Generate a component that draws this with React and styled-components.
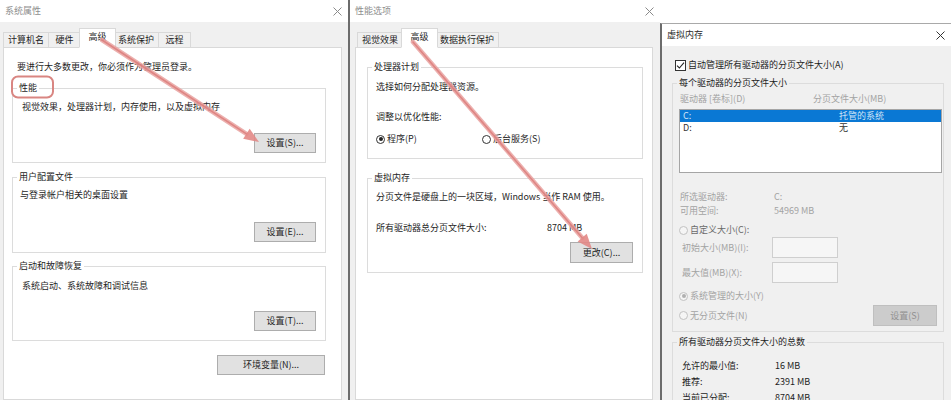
import React from "react";
import styled, { createGlobalStyle } from "styled-components";

const GlobalStyle = createGlobalStyle`
  * { box-sizing: border-box; }
  html, body { margin: 0; padding: 0; background: #fff; }
  body {
    font-family: "Noto Sans CJK SC", "Noto Sans", sans-serif;
    font-size: 9px;
    line-height: 12px;
    color: #1e1e1e;
  }
`;

const Screen = styled.div`
  position: relative;
  width: 951px;
  height: 400px;
  overflow: hidden;
  display: flex;
  align-items: flex-start;
  background: #fff;
`;

const Window = styled.section`
  flex: ${(p) => (p.$w ? "none" : "1")};
  width: ${(p) => (p.$w ? `${p.$w}px` : "auto")};
  height: ${(p) => 400 - (p.$top || 0)}px;
  margin-top: ${(p) => p.$top || 0}px;
  display: flex;
  flex-direction: column;
  background: #f0f0f0;
  border-left: ${(p) => (p.$edge ? "2px solid #6c6c6c" : "none")};
  border-top: ${(p) => (p.$top ? "1px solid #a9a9a9" : "none")};
`;

const TitleBar = styled.header`
  flex: none;
  height: 22px;
  display: flex;
  align-items: center;
  justify-content: space-between;
  padding: 0 6px 0 5px;
  background: #fff;
  color: ${(p) => (p.$active ? "#2a2a2a" : "#8e8e8e")};
`;

const CloseIcon = ({ active }) => (
  <svg width="9" height="9" viewBox="0 0 9 9">
    <path
      d="M0.5 0.5 L8.5 8.5 M8.5 0.5 L0.5 8.5"
      stroke={active ? "#333" : "#8a8a8a"}
      strokeWidth="1"
      fill="none"
    />
  </svg>
);

const Body = styled.div`
  flex: 1;
  display: flex;
  flex-direction: column;
  min-height: 0;
  padding: ${(p) => p.$pad};
`;

const TabStrip = styled.div`
  flex: none;
  height: 19px;
  display: flex;
  align-items: flex-end;
  padding-left: ${(p) => p.$indent || 0}px;
  position: relative;
  z-index: 1;
`;

const Tab = styled.div`
  height: ${(p) => (p.$selected ? 20 : 15)}px;
  min-width: ${(p) => (p.$selected ? 37 : 33)}px;
  padding: 0 4px;
  margin: 0 ${(p) => (p.$selected ? -2 : 0)}px
    ${(p) => (p.$selected ? -1 : 0)}px ${(p) => (p.$selected ? -2 : -1)}px;
  display: flex;
  align-items: center;
  justify-content: center;
  border: 1px solid #d9d9d9;
  border-bottom: ${(p) => (p.$selected ? "1px solid #fff" : "none")};
  background: ${(p) => (p.$selected ? "#fff" : "#f0f0f0")};
  position: relative;
  z-index: ${(p) => (p.$selected ? 2 : 0)};
  padding-bottom: ${(p) => (p.$selected ? 3 : 0)}px;
  &:first-child {
    margin-left: 0;
  }
`;

const TabPage = styled.div`
  flex: 1;
  display: flex;
  flex-direction: column;
  background: #fff;
  border: 1px solid #d9d9d9;
  padding: ${(p) => p.$pad};
`;

const Note = styled.p`
  margin: 0 0 0 ${(p) => p.$indent || 0}px;
`;

const Group = styled.fieldset`
  margin: ${(p) => p.$mt || 0}px 0 0 0;
  padding: 0;
  min-inline-size: 0;
  border: 1px solid #dcdcdc;
  flex: none;
`;

const Legend = styled.legend`
  margin-left: 4px;
  padding: 0 2px;
  font-size: 9px;
  line-height: 12px;
  color: ${(p) => p.$color || "#1e1e1e"};
`;

const GroupBody = styled.div`
  display: flex;
  flex-direction: column;
  padding: ${(p) => p.$pad};
`;

const Text = styled.div`
  margin-top: ${(p) => p.$mt || 0}px;
  padding-left: ${(p) => p.$indent || 0}px;
  color: ${(p) => p.$color || "#1e1e1e"};
  line-height: ${(p) => p.$lh || 12}px;
`;

const ButtonRow = styled.div`
  display: flex;
  justify-content: flex-end;
  margin-top: ${(p) => p.$mt || 0}px;
  padding-right: ${(p) => p.$pr || 0}px;
`;

const Button = styled.button`
  width: ${(p) => p.$w}px;
  height: ${(p) => p.$h || 20}px;
  padding: 0;
  font: inherit;
  line-height: 12px;
  color: ${(p) => (p.disabled ? "#909090" : "#1e1e1e")};
  background: ${(p) => (p.disabled ? "#cccccc" : "#e1e1e1")};
  border: 1px solid ${(p) => (p.disabled ? "#bfbfbf" : "#adadad")};
  border-radius: 0;
`;

const InfoRow = styled.div`
  display: flex;
  margin-top: ${(p) => p.$mt || 0}px;
  padding-left: ${(p) => p.$indent || 0}px;
  line-height: ${(p) => p.$lh || 12}px;
  color: ${(p) => p.$color || "#1e1e1e"};
`;

const InfoLabel = styled.span`
  width: ${(p) => p.$w}px;
  flex: none;
`;

const RadioRow = styled.div`
  display: flex;
  margin-top: ${(p) => p.$mt || 0}px;
`;

const RadioItem = styled.label`
  display: inline-flex;
  align-items: center;
  gap: 2px;
  width: ${(p) => (p.$w ? `${p.$w}px` : "auto")};
  margin-top: ${(p) => p.$mt || 0}px;
  color: ${(p) => p.$color || "#1e1e1e"};
  line-height: 12px;
`;

const RadioDot = styled.span`
  position: relative;
  flex: none;
  width: 9px;
  height: 9px;
  border-radius: 50%;
  border: 1px solid ${(p) => (p.$disabled ? "#c2c2c2" : "#333")};
  background: ${(p) => (p.$disabled ? "#f5f5f5" : "#fff")};
  &::after {
    content: "";
    display: ${(p) => (p.$checked ? "block" : "none")};
    position: absolute;
    inset: 1.5px;
    border-radius: 50%;
    background: ${(p) => (p.$disabled ? "#b0b0b0" : "#222")};
  }
`;

const Radio = ({ children, checked, disabled, w, mt, color }) => (
  <RadioItem $w={w} $mt={mt} $color={color}>
    <RadioDot $checked={checked} $disabled={disabled} />
    {children}
  </RadioItem>
);

const CheckRow = styled.label`
  display: flex;
  align-items: center;
  gap: 2px;
  margin-left: 3px;
`;

const CheckBox = styled.span`
  width: 11px;
  height: 11px;
  flex: none;
  border: 1px solid #333;
  background: #fff;
  display: flex;
  align-items: center;
  justify-content: center;
`;

const HeaderRow = styled.div`
  display: flex;
  padding-left: 1px;
  color: #a3a3a3;
`;

const ListBox = styled.div`
  margin-top: 4px;
  height: 64px;
  border: 1px solid #a5a5a5;
  background: #fff;
`;

const ListRow = styled.div`
  display: flex;
  height: 12px;
  line-height: 12px;
  background: ${(p) => (p.$selected ? "#0a78d4" : "transparent")};
  color: ${(p) => (p.$selected ? "#cfe3f7" : "#333")};
`;

const ListCell = styled.span`
  width: ${(p) => (p.$w ? `${p.$w}px` : "auto")};
  padding-left: ${(p) => p.$pl || 0}px;
  flex: none;
`;

const SizeRow = styled.div`
  display: flex;
  align-items: center;
  height: 21px;
  margin-top: ${(p) => p.$mt || 0}px;
  color: #a3a3a3;
`;

const SizeLabel = styled.span`
  width: 93px;
  padding-left: 3px;
  flex: none;
`;

const SizeInput = styled.span`
  width: 66px;
  height: 21px;
  border: 1px solid #cfcfcf;
  background: #f6f6f6;
`;

const SplitRow = styled.div`
  display: flex;
  align-items: center;
  justify-content: space-between;
  margin-top: ${(p) => p.$mt || 0}px;
  padding-right: ${(p) => p.$pr || 0}px;
`;

const Overlay = styled.svg`
  position: absolute;
  left: 0;
  top: 0;
  width: 951px;
  height: 400px;
  pointer-events: none;
  z-index: 10;
`;

const Arrow = ({ x1, y1, x2, y2 }) => {
  const dx = x2 - x1;
  const dy = y2 - y1;
  const len = Math.hypot(dx, dy);
  const ux = dx / len;
  const uy = dy / len;
  const px = -uy;
  const py = ux;
  const bx = x2 - ux * 15;
  const by = y2 - uy * 15;
  const pts = `${x2},${y2} ${bx + px * 6},${by + py * 6} ${bx - px * 6},${by - py * 6}`;
  return (
    <g>
      <line x1={x1} y1={y1} x2={bx} y2={by} stroke="#e9a3a1" strokeWidth="4.5" strokeLinecap="round" opacity="0.85" />
      <line x1={x1} y1={y1} x2={bx} y2={by} stroke="#dc7b79" strokeWidth="1.6" strokeLinecap="round" opacity="0.8" />
      <polygon points={pts} fill="#e28886" opacity="0.9" />
    </g>
  );
};

export default function App() {
  return (
    <>
      <GlobalStyle />
      <Screen>
        <Window $w={348}>
          <TitleBar>
            <span>系统属性</span>
            <CloseIcon />
          </TitleBar>
          <Body $pad="6px 6px 0 3px">
            <TabStrip>
              <Tab>计算机名</Tab>
              <Tab>硬件</Tab>
              <Tab $selected>高级</Tab>
              <Tab>系统保护</Tab>
              <Tab>远程</Tab>
            </TabStrip>
            <TabPage $pad="13px 15px 0 8px">
              <Note $indent={5}>要进行大多数更改，你必须作为管理员登录。</Note>

              <Group $mt={9}>
                <Legend>性能</Legend>
                <GroupBody $pad="7px 9px 9px 9px">
                  <Text>视觉效果，处理器计划，内存使用，以及虚拟内存</Text>
                  <ButtonRow $mt={20}>
                    <Button $w={62}>设置(S)...</Button>
                  </ButtonRow>
                </GroupBody>
              </Group>

              <Group $mt={8}>
                <Legend>用户配置文件</Legend>
                <GroupBody $pad="6px 9px 10px 7px">
                  <Text>与登录帐户相关的桌面设置</Text>
                  <ButtonRow $mt={21}>
                    <Button $w={62}>设置(E)...</Button>
                  </ButtonRow>
                </GroupBody>
              </Group>

              <Group $mt={7}>
                <Legend>启动和故障恢复</Legend>
                <GroupBody $pad="8px 9px 9px 9px">
                  <Text>系统启动、系统故障和调试信息</Text>
                  <ButtonRow $mt={19}>
                    <Button $w={62}>设置(T)...</Button>
                  </ButtonRow>
                </GroupBody>
              </Group>

              <ButtonRow $mt={14} $pr={1}>
                <Button $w={108}>环境变量(N)...</Button>
              </ButtonRow>
            </TabPage>
          </Body>
        </Window>

        <Window $w={312} $edge>
          <TitleBar>
            <span>性能选项</span>
            <CloseIcon />
          </TitleBar>
          <Body $pad="6px 7px 0 5px">
            <TabStrip $indent={2}>
              <Tab>视觉效果</Tab>
              <Tab $selected>高级</Tab>
              <Tab>数据执行保护</Tab>
            </TabStrip>
            <TabPage $pad="13px 9px 0 11px">
              <Group>
                <Legend>处理器计划</Legend>
                <GroupBody $pad="8px 8px 13px 8px">
                  <Text>选择如何分配处理器资源。</Text>
                  <Text $mt={18}>调整以优化性能:</Text>
                  <RadioRow $mt={10}>
                    <Radio w={106} checked>程序(P)</Radio>
                    <Radio>后台服务(S)</Radio>
                  </RadioRow>
                </GroupBody>
              </Group>

              <Group $mt={13}>
                <Legend>虚拟内存</Legend>
                <GroupBody $pad="7px 9px 9px 8px">
                  <Text>分页文件是硬盘上的一块区域，Windows 当作 RAM 使用。</Text>
                  <InfoRow $mt={19}>
                    <InfoLabel $w={171}>所有驱动器总分页文件大小:</InfoLabel>
                    <span>8704 MB</span>
                  </InfoRow>
                  <ButtonRow $mt={8}>
                    <Button $w={63} $h={21}>更改(C)...</Button>
                  </ButtonRow>
                </GroupBody>
              </Group>
            </TabPage>
          </Body>
        </Window>

        <Window $edge $top={23}>
          <TitleBar $active>
            <span>虚拟内存</span>
            <CloseIcon active />
          </TitleBar>
          <Body $pad="13px 7px 0 10px">
            <CheckRow>
              <CheckBox>
                <svg width="9" height="9" viewBox="0 0 9 9">
                  <path d="M1 4.6 L3.4 7 L8 1.6" stroke="#222" strokeWidth="1.1" fill="none" />
                </svg>
              </CheckBox>
              <span>自动管理所有驱动器的分页文件大小(A)</span>
            </CheckRow>

            <Group $mt={6}>
              <Legend>每个驱动器的分页文件大小</Legend>
              <GroupBody $pad="4px 1px 5px 6px">
                <HeaderRow>
                  <ListCell $w={133}>驱动器 [卷标](D)</ListCell>
                  <span>分页文件大小(MB)</span>
                </HeaderRow>
                <ListBox>
                  <ListRow $selected>
                    <ListCell $w={159} $pl={3}>C:</ListCell>
                    <span>托管的系统</span>
                  </ListRow>
                  <ListRow>
                    <ListCell $w={159} $pl={3}>D:</ListCell>
                    <span>无</span>
                  </ListRow>
                </ListBox>

                <InfoRow $mt={17} $lh={14} $color="#a3a3a3" $indent={1}>
                  <InfoLabel $w={94}>所选驱动器:</InfoLabel>
                  <span>C:</span>
                </InfoRow>
                <InfoRow $lh={14} $color="#a3a3a3" $indent={1}>
                  <InfoLabel $w={94}>可用空间:</InfoLabel>
                  <span>54969 MB</span>
                </InfoRow>

                <Radio mt={6} disabled color="#6a6a6a">自定义大小(C):</Radio>
                <SizeRow $mt={1}>
                  <SizeLabel>初始大小(MB)(I):</SizeLabel>
                  <SizeInput />
                </SizeRow>
                <SizeRow $mt={4}>
                  <SizeLabel>最大值(MB)(X):</SizeLabel>
                  <SizeInput />
                </SizeRow>

                <Radio mt={7} checked disabled color="#a3a3a3">系统管理的大小(Y)</Radio>
                <SplitRow $mt={3} $pr={5}>
                  <Radio disabled color="#a3a3a3">无分页文件(N)</Radio>
                  <Button $w={64} $h={21} disabled>设置(S)</Button>
                </SplitRow>
              </GroupBody>
            </Group>

            <Group $mt={4}>
              <Legend>所有驱动器分页文件大小的总数</Legend>
              <GroupBody $pad="10px 0 0 9px">
                <InfoRow $lh={16}>
                  <InfoLabel $w={93}>允许的最小值:</InfoLabel>
                  <span>16 MB</span>
                </InfoRow>
                <InfoRow $lh={16}>
                  <InfoLabel $w={93}>推荐:</InfoLabel>
                  <span>2391 MB</span>
                </InfoRow>
                <InfoRow $lh={16}>
                  <InfoLabel $w={93}>当前已分配:</InfoLabel>
                  <span>8704 MB</span>
                </InfoRow>
              </GroupBody>
            </Group>
          </Body>
        </Window>

        <Overlay viewBox="0 0 951 400">
          <rect x="12" y="76.5" width="41" height="21" rx="6" fill="none" stroke="#d98682" strokeWidth="2" />
          <Arrow x1={102} y1={40} x2={259} y2={142} />
          <Arrow x1={413} y1={42} x2={592} y2={249} />
        </Overlay>
      </Screen>
    </>
  );
}
